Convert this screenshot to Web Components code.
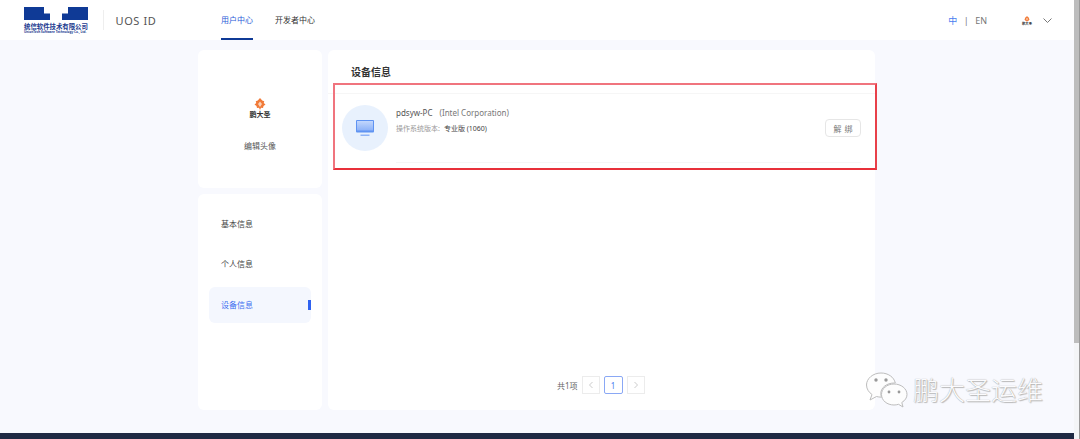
<!DOCTYPE html>
<html lang="zh"><head><meta charset="utf-8">
<style>
html,body{margin:0;height:100%;overflow:hidden}
body{font-family:"Noto Sans","Noto Sans CJK SC",sans-serif;background:#f8f9fe;width:1080px;height:439px}
app-shell{height:439px}
</style></head><body>
<app-shell>
  <top-bar slot="top"></top-bar>
  <side-column slot="side"></side-column>
  <device-panel slot="main"></device-panel>
  <watermark-tag slot="mark"></watermark-tag>
</app-shell>
<script>
const FONT='"Noto Sans","Noto Sans CJK SC",sans-serif';
const mk=(name,html)=>customElements.define(name,class extends HTMLElement{constructor(){super();this.attachShadow({mode:'open'}).innerHTML=html}});
const flower=(w,h)=>`<svg width="${w}" height="${h}" viewBox="0 0 24 24" style="display:block"><path d="M12 0l4.500 5 4 1.500L19.500 10 23 13l-4 3-1 4-4-.5L12 24l-2-4.500-4 .5-1-4-4-3 3.500-3L3.500 6.500l4-1.500z" fill="#f17a38"/><path d="M12 7l4 5-4 6-4-6z" fill="#fbd2b8"/></svg>`;
mk('app-shell',`<style>
:host{display:grid;grid-template-columns:1074px 6px;grid-template-rows:40px 393px 6px;width:1080px;position:relative}
.top{grid-column:1;grid-row:1}
.body{grid-column:1;grid-row:2;display:flex;gap:6px;padding:10px 0 23px 198px;box-sizing:border-box;height:393px}
.foot{grid-column:1;grid-row:3;background:#1f2a44}
.bar{grid-column:2;grid-row:1/4;background:#f4f5f7;border-right:1px solid #9a9a9a;box-sizing:border-box}
.thumb{height:343px;background:#bdbdbd}
.mark{position:absolute;left:866px;top:372px}
</style>
<div class="top"><slot name="top"></slot></div>
<div class="body"><slot name="side"></slot><slot name="main"></slot></div>
<div class="foot"></div><div class="bar"><div class="thumb"></div></div>
<div class="mark"><slot name="mark"></slot></div>`);
mk('top-bar',`<style>
:host{display:flex;height:40px;background:#fff;align-items:center;font-family:${FONT};padding-left:24px;box-sizing:border-box}
.logo{width:64px;height:27px;display:flex;flex-direction:column;align-items:flex-start}
.logo svg{display:block}
.cn{font-size:6.4px;line-height:7px;color:#1c3a8f;font-weight:700;white-space:nowrap;margin-top:3px}
.en{font-size:3.1px;line-height:4px;color:#1c3a8f;font-weight:700;white-space:nowrap}
.sep{width:1px;height:20px;background:#eee;margin:0 11.500px 0 15px}
.title{font-size:11px;color:#555;letter-spacing:.6px;width:105.500px}
.tab{font-size:8px;height:40px;line-height:39px;box-sizing:border-box;color:#333;margin-right:22px;position:relative}
.tab.on{color:#2a5bd7}
.tab.on::after{content:"";position:absolute;left:0;right:0;bottom:0;height:2px;background:#0f3a96}
.sp{flex:1}
.lang{font-size:9px;color:#777;display:flex;gap:6.500px;align-items:center;margin-right:35px}
.lang b{font-weight:400;color:#4a7df0}
.user{display:flex;align-items:center;gap:11px;margin-right:22px}
.av{width:10px;display:flex;flex-direction:column;align-items:center;margin-top:1px}
.av span{font-size:3.300px;line-height:4px;font-weight:700;color:#333;white-space:nowrap}
.user>svg{margin-top:1px}
</style>
<div class="logo"><svg width="64" height="13" viewBox="0 0 64 13"><path d="M0 0h20v6.500h6V13H0z" fill="#0f3a96"/><path d="M64 0H44v6.500h-6V13h26z" fill="#0f3a96"/></svg><span class="cn">统信软件技术有限公司</span><span class="en">UnionTech Software Technology Co., Ltd.</span></div>
<div class="sep"></div><div class="title">UOS ID</div>
<div class="tab on">用户中心</div><div class="tab">开发者中心</div>
<div class="sp"></div>
<div class="lang"><b>中</b><span>|</span><span>EN</span></div>
<div class="user"><div class="av">${flower(6,6)}<span>鹏大圣</span></div><svg width="9" height="5" viewBox="0 0 9 5"><path d="M.5.500l4 4 4-4" fill="none" stroke="#777" stroke-width="1"/></svg></div>`);
mk('side-column',`<style>
:host{display:flex;flex-direction:column;gap:6px;width:124px;font-family:${FONT}}
.card{background:#fff;border-radius:6px}
.a{height:138px;display:flex;flex-direction:column;align-items:center;padding-top:48px;box-sizing:border-box}
.brand{font-size:7px;font-weight:700;color:#333;line-height:8px;margin-top:1px}
.edit{font-size:8px;color:#555;margin-top:20px;line-height:13px}
.b{flex:1;padding:11px 11px;box-sizing:border-box;display:flex;flex-direction:column;gap:4.800px}
.it{height:36px;border-radius:6px;padding-left:12px;font-size:8px;color:#444;display:flex;align-items:center;justify-content:space-between}
.it.on{background:#f4f7fe;color:#3f6ff0}
.it.on i{width:3px;height:10px;background:#2f62f0;display:block}
</style>
<div class="card a">${flower(12,12)}<div class="brand">鹏大圣</div><div class="edit">编辑头像</div></div>
<div class="card b"><div class="it">基本信息</div><div class="it">个人信息</div><div class="it on">设备信息<i></i></div></div>`);
mk('device-panel',`<style>
:host{display:flex;flex-direction:column;width:547px;background:#fff;border-radius:6px;font-family:${FONT};position:relative;box-sizing:border-box}
.h{font-size:10px;font-weight:700;color:#333;height:44px;padding:14px 0 0 23px;box-sizing:border-box;line-height:16px;border-bottom:1px solid #f6f6f6}
.row{display:flex;align-items:flex-start;padding:11px 14px 0 13.500px;height:68px;box-sizing:border-box}
.ic{width:46px;height:46px;border-radius:50%;background:#e8f1fd;display:flex;align-items:center;justify-content:center;flex:none;margin-right:8.500px}
.t{padding-top:1px;flex:1}
.n{font-size:8px;color:#555;line-height:14px;white-space:nowrap}
.n span{margin-left:7px;color:#777}
.v{font-size:7px;color:#999;line-height:12px;margin-top:3px;white-space:nowrap}.v b{font-weight:400;color:#444;margin-left:4px}
.btn{width:36px;height:18px;border:1px solid #e6e6e6;border-radius:4px;font-size:8px;color:#777;display:flex;align-items:center;justify-content:center;gap:3px;box-sizing:border-box;margin-top:14px}
.line{height:1px;background:#f6f6f6;margin:0 14px 0 68px}
.redbox{position:absolute;left:4.500px;top:33px;width:544.500px;height:87px;box-sizing:border-box;border:2px solid #f0747e;border-bottom-color:#e8303a;border-right-color:#e8404a}
.pg{position:absolute;left:229px;top:326px;display:flex;align-items:center;gap:4px;font-size:8px;color:#666}
.p{width:18px;height:18px;box-sizing:border-box;border:1px solid #ececec;display:flex;align-items:center;justify-content:center;color:#4a7df0}
.p.on{width:19px;border-color:#8aa8f5;border-radius:2px}
</style>
<div class="h">设备信息</div>
<div class="row"><div class="ic"><svg width="18" height="17" viewBox="0 0 18 17"><defs><linearGradient id="g" x1="0" y1="0" x2="0" y2="1"><stop offset="0" stop-color="#c3d7fc"/><stop offset="1" stop-color="#8db2f8"/></linearGradient></defs><rect x="0" y="0" width="18" height="12.500" rx="1" fill="#5f93f2"/><rect x="1" y="1" width="16" height="9.500" fill="url(#g)"/><rect x="4.500" y="14.500" width="9" height="1.500" fill="#8fb4f7"/></svg></div>
<div class="t"><div class="n">pdsyw-PC<span>(Intel Corporation)</span></div><div class="v">操作系统版本:<b>专业版 (1060)</b></div></div>
<div class="btn"><span>解</span><span>绑</span></div></div>
<div class="line"></div>
<div class="redbox"></div>
<div class="pg"><span>共1项</span><div class="p"><svg width="6" height="8" viewBox="0 0 6 8"><path d="M4.500 1L1.500 4l3 3" fill="none" stroke="#ccc"/></svg></div><div class="p on">1</div><div class="p"><svg width="6" height="8" viewBox="0 0 6 8"><path d="M1.500 1l3 3-3 3" fill="none" stroke="#ccc"/></svg></div></div>`);
mk('watermark-tag',`<style>
:host{display:flex;align-items:flex-start;gap:5px;font-family:${FONT}}
span{font-size:26px;font-weight:300;color:#fbfbfd;line-height:34px;margin-top:1px;text-shadow:0 0 1px #999,1px 1px 1px #bbb;white-space:nowrap}
svg{display:block}
</style>
<svg width="42" height="37" viewBox="0 0 42 37"><g fill="#fdfdfd" stroke="#bdbdbd" stroke-width="1"><path d="M15 1C7 1 .5 6.500.5 13c0 4 2.500 7.500 5.500 9.500L4 28l6.500-3.500c1.500.4 3 .6 5 .7-.5-1.200-.7-2.500-.7-3.700 0-6 6-10.500 13.500-10.500h1C28 5 22 1 15 1z"/><path d="M28 12c-7 0-12.500 4.500-12.500 10.500S21 33 28 33c1.500 0 3-.2 4.500-.7L37 35l-1.200-4.500c3.300-2 5.200-4.800 5.200-8C41 16.500 35 12 28 12z"/></g><g fill="#999"><circle cx="10" cy="8" r="1.700"/><circle cx="20" cy="8" r="1.700"/><circle cx="23" cy="20" r="1.400"/><circle cx="33" cy="20" r="1.400"/></g></svg>
<span>鹏大圣运维</span>`);
</script>
</body></html>
